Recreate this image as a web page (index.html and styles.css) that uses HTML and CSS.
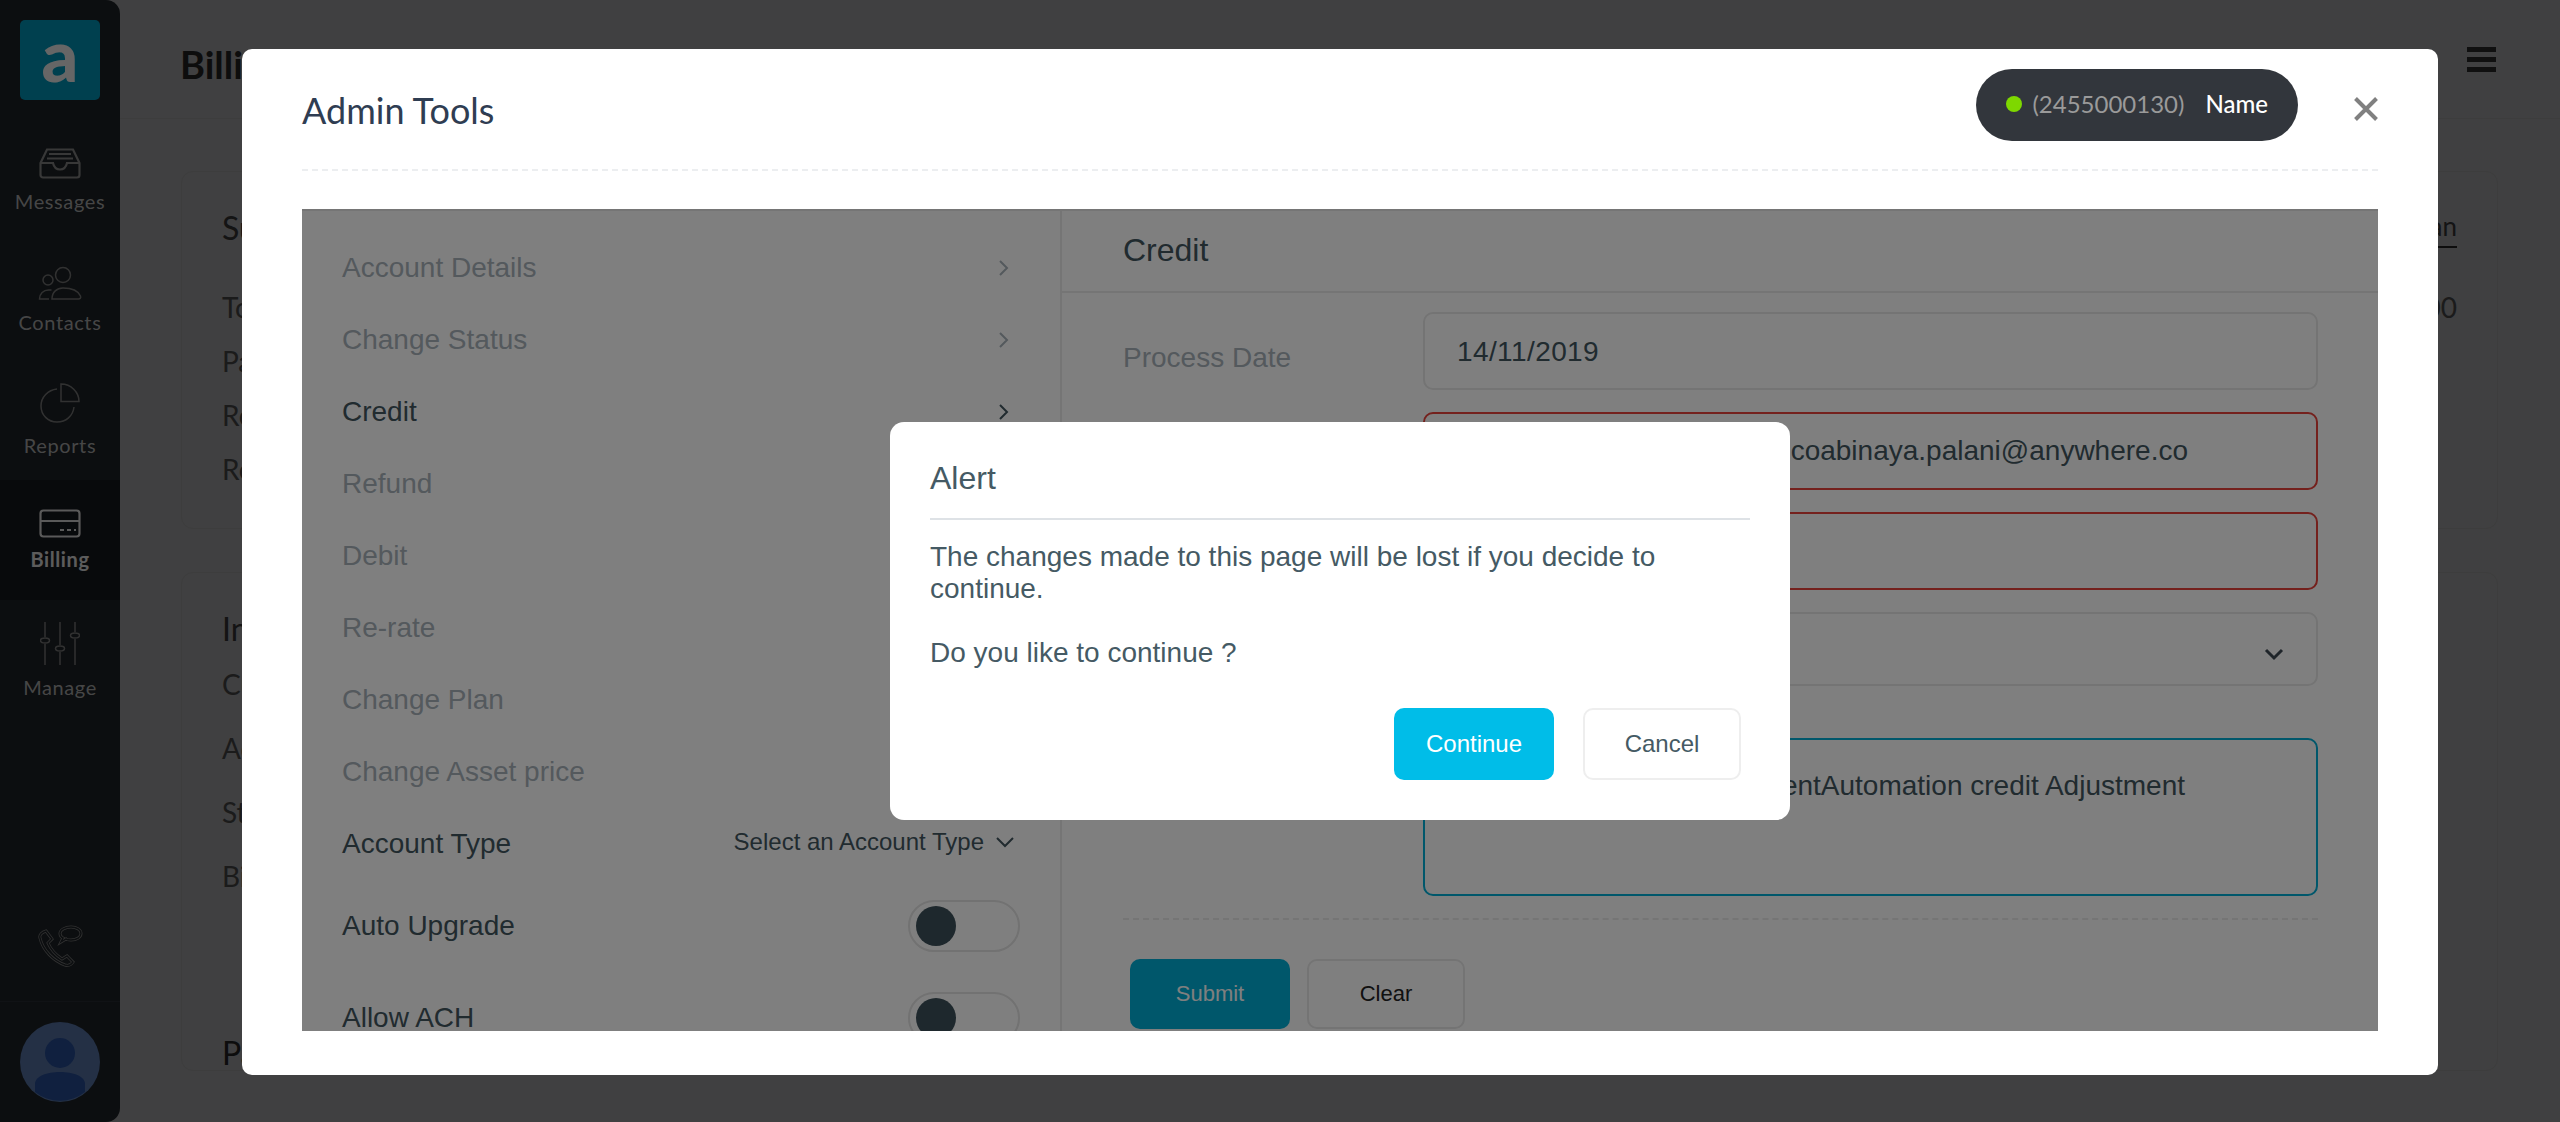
FILE: index.html
```html
<!DOCTYPE html>
<html lang="en">

<head>
  <meta charset="UTF-8">
  <meta name="viewport" content="width=device-width, initial-scale=1.0">
  <title>Billing - Admin Tools</title>
  <link rel="stylesheet" href="styles.css">
</head>

<body>
  <div class="app">
    <aside class="sidebar">
      <div class="logo">a</div>
      <nav class="side-nav">
        <a class="side-item" href="">
          <svg width="42" height="31" viewBox="0 0 42 31">
            <path d="M8 1.500h26l6.500 13.500V27a2.500 2.500 0 0 1-2.500 2.500H4A2.500 2.500 0 0 1 1.500 27V15L8 1.500z" />
            <path d="M1.500 15H14c1 4.500 3.500 6.500 7 6.500s6-2 7-6.500h12.500" />
            <path d="M10 6h22M8 10.500h26" />
          </svg>
          <span>Messages</span>
        </a>
        <a class="side-item thin" href="">
          <svg width="44" height="34" viewBox="0 0 44 34">
            <circle cx="25" cy="9" r="7.500" />
            <circle cx="10" cy="14" r="5" />
            <path d="M14 33c0-7 5-11 11-11 8 0 15 2.500 17.500 8 .7 2-.5 3-2 3H14z" />
            <path d="M11 33H1.500c0-5.500 4-9 9-9h3" />
          </svg>
          <span>Contacts</span>
        </a>
        <a class="side-item thin" href="">
          <svg width="40" height="40" viewBox="0 0 40 40">
            <path d="M17 6C8 7 1 14 1 23c0 9 7 16 16 16 9 0 16-6 17-15" />
            <path d="M21 1c10 0 18 8 18 17.500H21V1z" />
          </svg>
          <span>Reports</span>
        </a>
        <a class="side-item active" href="">
          <svg width="42" height="29" viewBox="0 0 42 29">
            <rect x="1.500" y="1.500" width="39" height="26" rx="3" />
            <path d="M1.500 12h39" />
            <path d="M21 21h4M28 21h4M35 21h2" />
          </svg>
          <span>Billing</span>
        </a>
        <a class="side-item thin" href="">
          <svg width="40" height="43" viewBox="0 0 40 43">
            <path d="M5 0v15M5 22v21M20 0v23M20 30v13M35 0v10M35 17v26" />
            <ellipse cx="5" cy="18.500" rx="4.500" ry="2.500" />
            <ellipse cx="20" cy="26.500" rx="4.500" ry="2.500" />
            <ellipse cx="35" cy="13.500" rx="4.500" ry="2.500" />
          </svg>
          <span>Manage</span>
        </a>
      </nav>
      <div class="side-phone">
        <svg width="46" height="42" viewBox="0 0 46 42">
          <path class="phone-out" d="M9 6l6 8-4 4c3 7 8 12 14 16l5-3 6 6c-2 3-5 4-8 3C17 36 6 26 3 13c-1-3 2-6 6-7z" />
          <path class="phone-in" d="M9 6l6 8-4 4c3 7 8 12 14 16l5-3 6 6c-2 3-5 4-8 3C17 36 6 26 3 13c-1-3 2-6 6-7z" />
          <path class="phone-out" d="M34 2c6 0 10 3 10 6.500S40 15 34 15c-2 0-4 0-5-1l-5 3 2-4c-2-1-3-3-3-4.500C23 5 28 2 34 2z" />
          <path class="phone-in" d="M34 2c6 0 10 3 10 6.500S40 15 34 15c-2 0-4 0-5-1l-5 3 2-4c-2-1-3-3-3-4.500C23 5 28 2 34 2z" />
        </svg>
      </div>
      <div class="side-user">
        <svg width="80" height="80" viewBox="0 0 80 80">
          <circle class="avatar-bg" cx="40" cy="40" r="40" />
          <circle class="avatar-fg" cx="40" cy="31" r="15" />
          <path class="avatar-fg" d="M15 70V62c0-8 12-12 25-12s25 4 25 12v8a40 40 0 0 1-50 0z" />
        </svg>
      </div>
    </aside>

    <div class="page">
      <header class="page-head">
        <h1>Billing</h1>
        <div class="burger"><i></i><i></i><i></i></div>
      </header>
      <section class="card summary">
        <div class="card-title">
          <h2>Summary</h2>
          <a href="">Change Plan</a>
        </div>
        <div class="row"><span>Total Balance</span><span>$0.00</span></div>
        <div class="row"><span>Past Due</span></div>
        <div class="row"><span>Recent Payment</span></div>
        <div class="row"><span>Recurring Charges</span></div>
      </section>
      <section class="card info">
        <h2>Invoice Info</h2>
        <div class="row"><span>Current Cycle</span></div>
        <div class="row"><span>Account Number</span></div>
        <div class="row"><span>Status</span></div>
        <div class="row"><span>Bill Date</span></div>
        <h2 class="pay-title">Payment</h2>
      </section>
    </div>
  </div>

  <div class="backdrop"></div>

  <div class="modal">
    <div class="modal-head">
      <h2>Admin Tools</h2>
      <div class="pill">
        <i class="dot"></i>
        <span class="pill-num">(2455000130)</span>
        <span class="pill-name">Name</span>
      </div>
      <svg class="close" width="24" height="24" viewBox="0 0 24 24">
        <path d="M1.500 1.500l21 21M22.500 1.500l-21 21" />
      </svg>
    </div>

    <div class="tools">
      <div class="tools-nav">
        <a class="tool-item" href="">Account Details<svg width="12" height="16" viewBox="0 0 12 16"><path d="M2 1l7 7-7 7" /></svg></a>
        <a class="tool-item" href="">Change Status<svg width="12" height="16" viewBox="0 0 12 16"><path d="M2 1l7 7-7 7" /></svg></a>
        <a class="tool-item current" href="">Credit<svg width="12" height="16" viewBox="0 0 12 16"><path d="M2 1l7 7-7 7" /></svg></a>
        <a class="tool-item" href="">Refund<svg width="12" height="16" viewBox="0 0 12 16"><path d="M2 1l7 7-7 7" /></svg></a>
        <a class="tool-item" href="">Debit<svg width="12" height="16" viewBox="0 0 12 16"><path d="M2 1l7 7-7 7" /></svg></a>
        <a class="tool-item" href="">Re-rate<svg width="12" height="16" viewBox="0 0 12 16"><path d="M2 1l7 7-7 7" /></svg></a>
        <a class="tool-item" href="">Change Plan<svg width="12" height="16" viewBox="0 0 12 16"><path d="M2 1l7 7-7 7" /></svg></a>
        <a class="tool-item" href="">Change Asset price<svg width="12" height="16" viewBox="0 0 12 16"><path d="M2 1l7 7-7 7" /></svg></a>
        <div class="acct-type">
          <span>Account Type</span>
          <span class="acct-select">Select an Account Type
            <svg width="18" height="11" viewBox="0 0 18 11"><path d="M1 1l8 8 8-8" /></svg>
          </span>
        </div>
        <div class="switch-row">
          <span>Auto Upgrade</span>
          <div class="switch"><i></i></div>
        </div>
        <div class="switch-row">
          <span>Allow ACH</span>
          <div class="switch"><i></i></div>
        </div>
      </div>

      <div class="tools-main">
        <h3>Credit</h3>
        <div class="form">
          <label class="date-label">Process Date</label>
          <div class="field date">14/11/2019</div>
          <label>Email</label>
          <div class="field error far">automationcoabinaya.palani@anywhere.co</div>
          <label>Amount</label>
          <div class="field error"></div>
          <label>Reason</label>
          <div class="field select">
            <svg width="20" height="13" viewBox="0 0 20 13"><path d="M2 2l8 8 8-8" /></svg>
          </div>
          <label class="notes-label">Notes</label>
          <div class="field notes">PaymentAutomation credit Adjustment</div>
        </div>
        <div class="form-btns">
          <button class="btn-submit">Submit</button>
          <button class="btn-clear">Clear</button>
        </div>
      </div>
      <div class="scrim"></div>
    </div>

    <div class="alert">
      <h4>Alert</h4>
      <p>The changes made to this page will be lost if you decide to continue.</p>
      <p>Do you like to continue ?</p>
      <div class="alert-btns">
        <button class="btn-continue">Continue</button>
        <button class="btn-cancel">Cancel</button>
      </div>
    </div>
  </div>
</body>

</html>
```

FILE: styles.css
```css
* {
  box-sizing: border-box;
}

html,
body {
  margin: 0;
  height: 1122px;
  overflow: hidden;
}

body {
  font-family: "Liberation Sans", Arial, sans-serif;
  background-color: #a0a0a2;
  position: relative;
}

a {
  text-decoration: none;
  color: inherit;
}

h1,
h2,
h3,
h4,
p {
  margin: 0;
  font-weight: 400;
}

.app {
  display: flex;
  height: 1122px;
}

/* sidebar */
.sidebar {
  width: 120px;
  flex: none;
  display: flex;
  flex-direction: column;
  background-color: #1e2328;
  border-radius: 0 14px 14px 0;
  font-family: Lato, sans-serif;
}

.logo {
  width: 80px;
  height: 80px;
  flex: none;
  margin: 20px;
  border-radius: 5px;
  background-color: #00a0c6;
  color: #fff;
  font-size: 72px;
  font-weight: 900;
  line-height: 68px;
  text-align: center;
}

.side-item {
  height: 120px;
  display: flex;
  flex-direction: column;
  align-items: center;
  justify-content: center;
  gap: 10px;
  color: #b0b0b0;
  font-size: 20px;
  line-height: 24px;
  letter-spacing: 0.6px;
}

.side-item svg {
  fill: none;
  stroke: #8c8c8c;
  stroke-width: 2.2;
}

.side-item.thin svg {
  stroke: #7c7c7c;
  stroke-width: 1.5;
}

.side-item.active {
  gap: 9px;
  background-color: #16191e;
  color: #e6e6e6;
  font-weight: 700;
}

.side-item.active svg {
  stroke: #e0e0e0;
}

.side-phone {
  margin-top: auto;
  padding-bottom: 34px;
  display: flex;
  justify-content: center;
}

.phone-out {
  fill: none;
  stroke: #7a7a7a;
  stroke-width: 3;
}

.phone-in {
  fill: none;
  stroke: #1e2328;
  stroke-width: 1.400;
}

.side-user {
  height: 121px;
  padding: 20px;
  border-top: 1px solid #2a2f35;
}

.side-user svg {
  display: block;
}

.avatar-bg {
  fill: #5a78ac;
}

.avatar-fg {
  fill: #28509e;
}

/* page behind the modal */
.page {
  flex: 1;
  padding: 0 62px 0 61px;
  font-family: Lato, sans-serif;
  color: #444;
}

.page-head {
  height: 119px;
  margin: 0 -62px 52px -61px;
  padding: 0 64px 0 60px;
  display: flex;
  align-items: center;
  justify-content: space-between;
  border-bottom: 1px solid #999;
}

.page-head h1 {
  margin-top: 9px;
  font-size: 38px;
  font-weight: 700;
  color: #222;
}

.burger {
  display: flex;
  flex-direction: column;
  gap: 5px;
  margin-top: 1px;
}

.burger i {
  display: block;
  width: 29px;
  height: 5px;
  background-color: #2a2a2a;
}

.card {
  padding: 36px 40px 0 40px;
  border: 1px solid #999;
  border-radius: 12px;
}

.card h2 {
  font-size: 32px;
  line-height: 40px;
  color: #333;
}

.summary {
  height: 358px;
  margin-bottom: 43px;
}

.card-title {
  display: flex;
  align-items: flex-start;
  justify-content: space-between;
  margin-bottom: 32px;
}

.card-title a {
  font-size: 26px;
  line-height: 36px;
  padding-bottom: 2px;
  color: #333;
  border-bottom: 2px solid #222;
}

.row {
  display: flex;
  justify-content: space-between;
  font-size: 28px;
  line-height: 54px;
}

.info {
  height: 499px;
}

.info h2 {
  margin-bottom: 8px;
}

.info .row {
  margin-bottom: 10px;
}

.info .pay-title {
  margin-top: 130px;
  color: #222;
}

.backdrop {
  position: absolute;
  inset: 0;
  background-color: rgba(0, 0, 0, 0.6);
}

/* admin tools modal */
.modal {
  position: absolute;
  left: 242px;
  top: 49px;
  width: 2196px;
  height: 1026px;
  padding: 0 60px;
  background-color: #fff;
  border-radius: 10px;
}

.modal-head {
  height: 122px;
  display: flex;
  align-items: center;
  border-bottom: 2px dashed #eceef0;
}

.modal-head h2 {
  margin-top: 2px;
  font-family: Lato, sans-serif;
  font-size: 36px;
  color: #2f3d52;
}

.pill {
  margin: 0 0 8px auto;
  height: 72px;
  padding: 0 30px 3px;
  display: flex;
  align-items: center;
  border-radius: 36px;
  background-color: #32363c;
  font-family: Lato, sans-serif;
  font-size: 24px;
}

.dot {
  width: 16px;
  height: 16px;
  margin-right: 10px;
  border-radius: 50%;
  background-color: #7ed800;
}

.pill-num {
  color: #9a9a9a;
  margin-right: 21px;
}

.pill-name {
  color: #fff;
  font-weight: 500;
}

.close {
  margin-left: 56px;
  fill: none;
  stroke: #808080;
  stroke-width: 4;
}

.tools {
  position: relative;
  height: 822px;
  margin-top: 38px;
  display: flex;
  overflow: hidden;
  color: #42565f;
}

.scrim {
  position: absolute;
  inset: 0;
  background-color: rgba(0, 0, 0, 0.5);
}

.tools-nav {
  width: 760px;
  flex: none;
  padding: 21px 40px 0 40px;
  border-top: 2px solid #eaeaea;
  border-right: 2px solid #eaeaea;
  font-size: 28px;
}

.tool-item {
  height: 72px;
  padding-right: 10px;
  display: flex;
  align-items: center;
  justify-content: space-between;
  color: #a8b2ba;
}

.tool-item svg {
  fill: none;
  stroke: currentColor;
  stroke-width: 2;
}

.tool-item.current {
  color: #42565f;
}

.acct-type {
  height: 72px;
  padding-right: 6px;
  display: flex;
  align-items: center;
  justify-content: space-between;
}

.acct-select {
  display: flex;
  align-items: center;
  gap: 12px;
  margin-top: -4px;
  font-size: 24px;
}

.acct-select svg {
  fill: none;
  stroke: #42565f;
  stroke-width: 2;
}

.switch-row {
  height: 52px;
  margin-bottom: 40px;
  display: flex;
  align-items: center;
  justify-content: space-between;
}

.acct-type + .switch-row {
  margin-top: 20px;
}

.switch {
  width: 112px;
  height: 52px;
  padding: 4px 6px;
  border: 2px solid #e4e4e4;
  border-radius: 26px;
}

.switch i {
  display: block;
  width: 40px;
  height: 40px;
  border-radius: 50%;
  background-color: #3c505a;
}

.tools-main {
  flex: 1;
  padding: 0 60px 0 61px;
  border-top: 2px solid #eaeaea;
}

.tools-main h3 {
  height: 82px;
  margin: 0 -60px 19px -61px;
  padding-left: 61px;
  font-size: 32px;
  line-height: 78px;
  border-bottom: 2px solid #eaeaea;
}

.form {
  display: grid;
  grid-template-columns: 300px 895px;
  grid-template-rows: 78px 78px 78px 74px 188px;
  row-gap: 22px;
  padding-bottom: 22px;
  border-bottom: 2px dashed #eaeaea;
  font-size: 28px;
}

.form label {
  padding-top: 26px;
  color: #a8b2ba;
}

.form .date-label {
  padding-top: 30px;
}

.form .notes-label,
.field.notes {
  margin-top: 30px;
}

.field {
  display: flex;
  align-items: center;
  padding: 0 32px;
  white-space: nowrap;
  border: 2px solid #e8e8e8;
  border-radius: 10px;
}

.field.date {
  padding-top: 2px;
  letter-spacing: 0.4px;
}

.field.error {
  border-color: #e8423a;
}

.field.far {
  justify-content: flex-end;
  padding: 0 128px 0 0;
}

.field.select {
  justify-content: flex-end;
  padding-right: 32px;
  padding-top: 10px;
}

.field.select svg {
  fill: none;
  stroke: #3f4a54;
  stroke-width: 3;
}

.field.notes {
  align-items: flex-start;
  justify-content: flex-end;
  height: 158px;
  padding: 30px 131px 0 0;
  border-color: #00aed6;
  line-height: 32px;
}

.form-btns {
  display: flex;
  gap: 17px;
  margin: 39px 0 0 7px;
}

.form-btns button {
  height: 70px;
  border-radius: 10px;
  font-family: inherit;
  font-size: 22px;
}

.btn-submit {
  width: 160px;
  border: none;
  background-color: #00aed6;
  color: #fff;
}

.btn-clear {
  width: 158px;
  border: 2px solid #e8e8e8;
  background-color: #fff;
  color: #222;
}

/* alert box */
.alert {
  position: absolute;
  left: 648px;
  top: 373px;
  width: 900px;
  height: 398px;
  padding: 36px 40px 0;
  background-color: #fff;
  border-radius: 14px;
  color: #455a64;
  font-size: 28px;
  line-height: 32px;
}

.alert h4 {
  height: 62px;
  margin-bottom: 21px;
  font-size: 32px;
  line-height: 40px;
  border-bottom: 2px solid #dee2e6;
}

.alert p + p {
  margin-top: 32px;
}

.alert-btns {
  display: flex;
  justify-content: flex-end;
  gap: 29px;
  margin: 39px 9px 0 0;
}

.alert-btns button {
  height: 72px;
  border-radius: 10px;
  font-family: inherit;
  font-size: 24px;
}

.btn-continue {
  width: 160px;
  border: none;
  background-color: #00bde8;
  color: #fff;
}

.btn-cancel {
  width: 158px;
  border: 2px solid #eeeeee;
  background-color: #fff;
  color: #455a64;
}
```
